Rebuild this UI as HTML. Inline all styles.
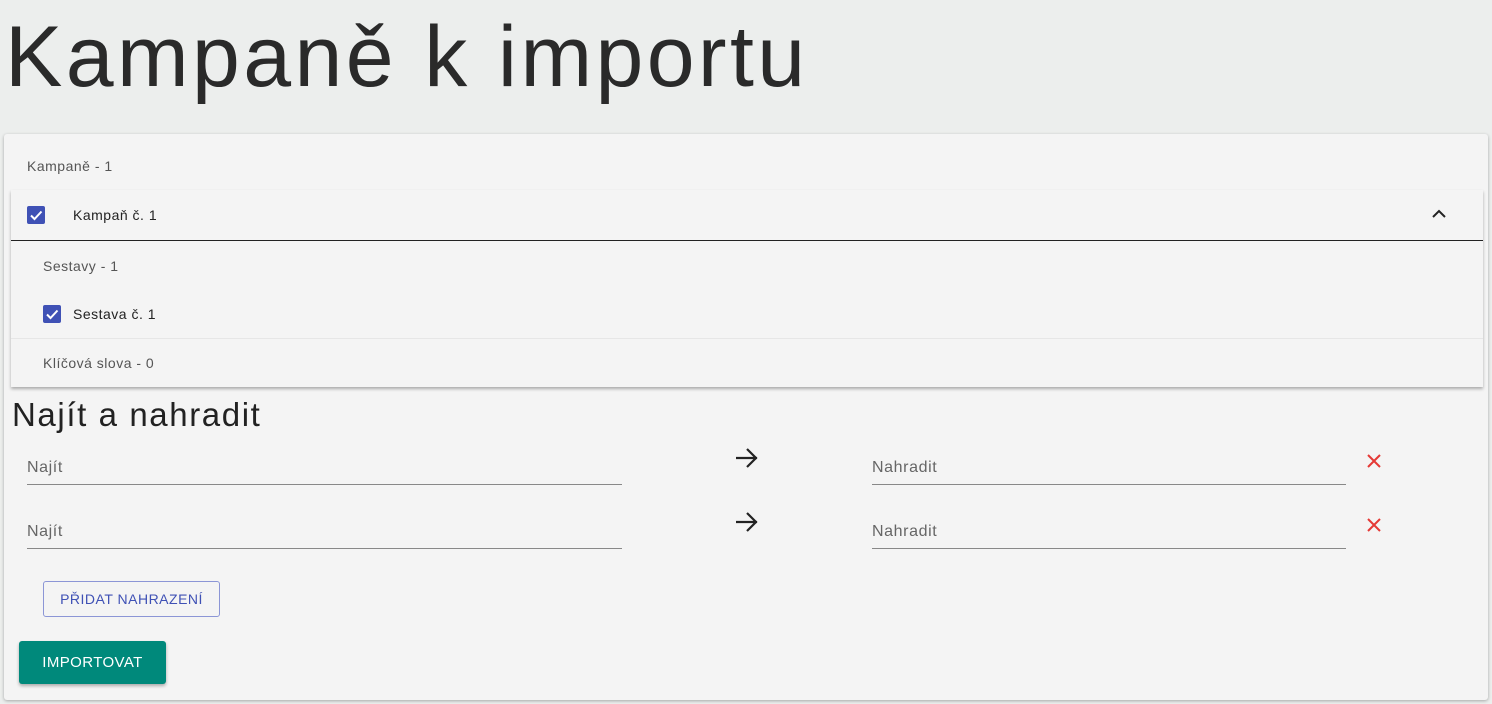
<!DOCTYPE html>
<html><head><meta charset="utf-8"><style>
*{box-sizing:border-box;margin:0;padding:0}
body{width:1492px;height:704px;background:#eceeed;font-family:"Liberation Sans",sans-serif;color:#222;position:relative;overflow:hidden}
.abs{position:absolute}
h1{position:absolute;left:5px;top:8px;font-size:86px;font-weight:normal;letter-spacing:3.4px;color:#2a2a2a;white-space:nowrap}
.card{left:4px;top:134px;width:1484px;height:566px;background:#f4f4f4;border-radius:3px;box-shadow:0 1px 3px rgba(0,0,0,.3)}
.panel{left:11px;top:190px;width:1472px;height:197px;background:#f4f4f4;box-shadow:0 2px 3px rgba(0,0,0,.3)}
.sm{font-size:14px;color:#555;letter-spacing:.5px}
.cb{width:18px;height:18px;background:#3f51b5;border-radius:2px}
.line{height:1px;background:#888}
.ph{font-size:16px;color:#666;letter-spacing:.6px}
</style></head><body>
<h1>Kampaně k importu</h1>
<div class="abs card"></div>
<div class="abs sm" style="left:27px;top:158px">Kampaně - 1</div>
<div class="abs panel"></div>
<div class="abs cb" style="left:27px;top:206px"><svg width="18" height="18"><path d="M4 9.5l3.5 3.5L14.5 5.5" stroke="#fff" stroke-width="2" fill="none"/></svg></div>
<div class="abs sm" style="left:73px;top:207px;color:#222">Kampaň č. 1</div>
<svg class="abs" style="left:1431px;top:208px" width="16" height="12"><path d="M2 9l6-6 6 6" stroke="#222" stroke-width="2" fill="none"/></svg>
<div class="abs" style="left:11px;top:240px;width:1472px;height:1px;background:#222"></div>
<div class="abs sm" style="left:43px;top:258px">Sestavy - 1</div>
<div class="abs cb" style="left:43px;top:305px"><svg width="18" height="18"><path d="M4 9.5l3.5 3.5L14.5 5.5" stroke="#fff" stroke-width="2" fill="none"/></svg></div>
<div class="abs sm" style="left:73px;top:306px;color:#222">Sestava č. 1</div>
<div class="abs" style="left:11px;top:338px;width:1472px;height:1px;background:#e6e6e6"></div>
<div class="abs sm" style="left:43px;top:355px">Klíčová slova - 0</div>
<div class="abs" style="left:12px;top:396px;font-size:33px;color:#222;letter-spacing:1.6px">Najít a nahradit</div>
<div class="abs ph" style="left:27px;top:459px">Najít</div>
<div class="abs line" style="left:27px;top:484px;width:595px"></div>
<div class="abs ph" style="left:27px;top:523px">Najít</div>
<div class="abs line" style="left:27px;top:548px;width:595px"></div>
<svg class="abs" style="left:734px;top:446px" width="26" height="24"><path d="M2 12h21M13 3l9 9-9 9" stroke="#222" stroke-width="2.2" fill="none"/></svg>
<svg class="abs" style="left:734px;top:510px" width="26" height="24"><path d="M2 12h21M13 3l9 9-9 9" stroke="#222" stroke-width="2.2" fill="none"/></svg>
<div class="abs ph" style="left:872px;top:459px">Nahradit</div>
<div class="abs line" style="left:872px;top:484px;width:474px"></div>
<div class="abs ph" style="left:872px;top:523px">Nahradit</div>
<div class="abs line" style="left:872px;top:548px;width:474px"></div>
<svg class="abs" style="left:1366px;top:453px" width="16" height="16"><path d="M2 2l12 12M14 2L2 14" stroke="#e53935" stroke-width="2"/></svg>
<svg class="abs" style="left:1366px;top:517px" width="16" height="16"><path d="M2 2l12 12M14 2L2 14" stroke="#e53935" stroke-width="2"/></svg>
<div class="abs" style="left:43px;top:581px;width:177px;height:36px;border:1px solid #8c96d6;border-radius:3px;color:#3f51b5;font-size:14px;line-height:34px;text-align:center;letter-spacing:.5px">PŘIDAT NAHRAZENÍ</div>
<div class="abs" style="left:19px;top:641px;width:147px;height:43px;background:#00897b;border-radius:3px;color:#fff;font-size:15px;line-height:43px;text-align:center;letter-spacing:.4px;box-shadow:0 2px 3px rgba(0,0,0,.3)">IMPORTOVAT</div>
</body></html>
